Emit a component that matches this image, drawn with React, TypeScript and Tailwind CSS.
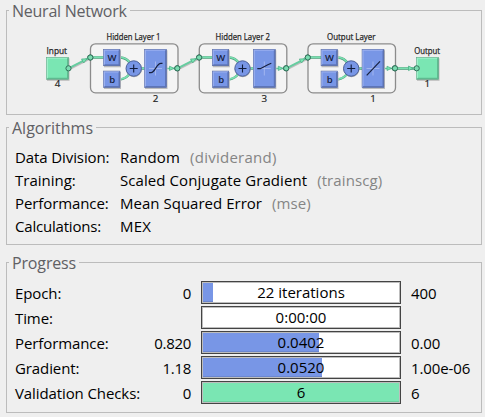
import type { ReactNode } from "react";

function Panel({ title, titleClass, className, children }: { title: string; titleClass: string; className: string; children: ReactNode }) {
  return (
    <section className={`relative ml-1.5 w-[476px] shrink-0 border border-[#bcbcbc] ${className}`}>
      <h2 className={`absolute -top-[11px] left-[2px] h-[22px] whitespace-nowrap bg-[#efefef] px-[3px] text-[16px] leading-[22px] text-[#606064] ${titleClass}`}>{title}</h2>
      {children}
    </section>
  );
}

function Label({ x, y, w, children }: { x: number; y: number; w: number; children: string }) {
  return (
    <text x={x} y={y} textLength={w} lengthAdjust="spacingAndGlyphs" fontSize="9.700" fill="#222" stroke="#222" strokeWidth="0.250">
      {children}
    </text>
  );
}

function Port({ x, y }: { x: number; y: number }) {
  return <circle cx={x} cy={y} r="2.600" fill="#7adbb0" stroke="#32705a" strokeWidth="1" />;
}

function Arrow({ x, y }: { x: number; y: number }) {
  return (
    <g>
      <path d={`M${x} ${y + 1}l20.500 -10.500`} stroke="#bdbdbd" strokeWidth="2.500" />
      <path d={`M${x} ${y}l20.500 -10.500`} stroke="#66cda0" strokeWidth="2" />
      <path d={`M${x + 18.5} ${y - 9.5}l-5.500 0.200l2.200 4z`} fill="#79e6b3" stroke="#4aa982" strokeWidth="0.700" />
    </g>
  );
}

function Block({ x, y, w, h, green }: { x: number; y: number; w: number; h: number; green?: boolean }) {
  const face = green ? "#7ae6b3" : "#7896e6";
  const light = green ? "#9df0ca" : "#9ab0ef";
  const dark = green ? "#5fba90" : "#5d75b8";
  const edge = green ? "#659b82" : "#5c6b9a";
  return (
    <g>
      <rect x={x + 0.5} y={y + 1} width={w + 0.5} height={h + 0.5} fill="#bcbcbc" />
      <rect x={x} y={y} width={w} height={h} fill={face} />
      <path d={`M${x} ${y}h${w}l-1.500 1.500h${3 - w}v${h - 3}l-1.500 1.500z`} fill={light} />
      <path d={`M${x + w} ${y}v${h}h${-w}l1.500 -1.500h${w - 3}v${3 - h}z`} fill={dark} />
      <rect x={x} y={y} width={w} height={h} fill="none" stroke={edge} strokeWidth="0.500" />
    </g>
  );
}

function Layer({ x, title, tx, tw, size, curve }: { x: number; title: string; tx: number; tw: number; size: string; curve: string }) {
  return (
    <g>
      <Label x={tx} y={40} w={tw}>{title}</Label>
      <rect x={x + 0.5} y="43.800" width="87.500" height="49" rx="5" fill="#f4f4f4" stroke="#8c8c8c" strokeWidth="1.300" />
      <g transform={`translate(${x} 0)`} fill="none">
        <path d="M0 57.500H14M30 57.500Q37 58 40 63M30 79.500Q37 78.500 40 73M51 68.500H55" stroke="#4e9e7b" strokeWidth="2.600" />
        <path d="M0 57.200H14M30 57.200Q37 57.700 40 63M30 79.200Q37 78.200 40 73M51 68.200H55" stroke="#79dfb0" strokeWidth="1.600" />
        <path d="M77 68.500H87" stroke="#66cda0" strokeWidth="1.500" />
        <path d="M79.500 66.200L84 68.300L79.500 70.500z" fill="#79e6b3" stroke="#4aa982" strokeWidth="0.700" />
        <Block x={13.500} y={49.300} w={16.500} h={16.500} />
        <Block x={13.500} y={71} w={16.500} h={16.500} />
        <circle cx="44" cy="69.200" r="8" fill="#aaa" />
        <circle cx="43.700" cy="68.500" r="7.700" fill="#7896e6" stroke="#4d629b" strokeWidth="1" />
        <path d="M39.700 68.500h8M43.700 64.500v8" stroke="#111c3c" strokeWidth="1.100" />
        <Block x={54.500} y={49.300} w={22} h={38.200} />
        <path d="M59 68.500h13M65.500 61.500v14" stroke="#b4c4f4" strokeWidth="0.700" />
        <path d={curve} stroke="#17213f" strokeWidth="1.200" />
        <text x="22" y="60.700" textAnchor="middle" fontSize="9.500" fontWeight="600" fill="#16213e">W</text>
        <text x="22.300" y="82.800" textAnchor="middle" fontSize="9.500" fontWeight="600" fill="#16213e">b</text>
      </g>
      <Port x={x + 0.3} y={57.5} />
      <Port x={x + 87.3} y={68.3} />
      <text x={x + 65.5} y="102.300" textAnchor="middle" fontSize="9.800" fill="#222" stroke="#222" strokeWidth="0.200">{size}</text>
    </g>
  );
}

function Network() {
  return (
    <svg width="474" height="102" viewBox="7 11 474 102" className="block font-['Open_Sans',sans-serif]">
      <Label x={46.5} y={54} w={20.5}>Input</Label>
      <Label x={414.2} y={54} w={25.8}>Output</Label>
      <Block x={46.500} y={57.300} w={22} h={22} green />
      <Block x={416.500} y={57.300} w={22} h={22} green />
      <text x="57.500" y="87.300" textAnchor="middle" fontSize="9.800" fill="#222" stroke="#222" strokeWidth="0.200">4</text>
      <text x="427.300" y="87.300" textAnchor="middle" fontSize="9.800" fill="#222" stroke="#222" strokeWidth="0.200">1</text>
      <Layer x={90} title="Hidden Layer 1" tx={106.5} tw={54} size="2" curve="M59 72.600H61C65.500 72.600 66 63.300 71 63.300H72.500" />
      <Layer x={198.800} title="Hidden Layer 2" tx={215.5} tw={54.5} size="3" curve="M58.500 68.700H61.500L69 64.700L72.500 63.300" />
      <Layer x={307.500} title="Output Layer" tx={327} tw={48.5} size="1" curve="M59.200 75.300L72.500 61.300" />
      <Arrow x={68.500} y={68.300} />
      <Arrow x={177.500} y={68.300} />
      <Arrow x={286.300} y={68.300} />
      <path d="M395 68.500H416" stroke="#4e9e7b" strokeWidth="2.600" />
      <path d="M395 68.300H416" stroke="#79dfb0" strokeWidth="1.500" />
      <path d="M408.500 66L413 68.300L408.500 70.600z" fill="#79e6b3" stroke="#4aa982" strokeWidth="0.700" />
      <Port x={68.500} y={68.300} />
      <Port x={177.300} y={68.300} />
      <Port x={286.200} y={68.300} />
      <Port x={90.300} y={57.500} />
      <Port x={199.100} y={57.500} />
      <Port x={307.800} y={57.500} />
      <Port x={395} y={68.300} />
      <Port x={416.700} y={68.300} />
    </svg>
  );
}

const algorithms = [
  { name: "Data Division:", value: "Random", fn: "(dividerand)", nameClass: "tracking-[-0.1px]", valueClass: "tracking-[0.2px]", fnClass: "tracking-[0.25px]" },
  { name: "Training:", value: "Scaled Conjugate Gradient", fn: "(trainscg)", nameClass: "tracking-[0px]", valueClass: "tracking-[0.08px]", fnClass: "tracking-[0.1px]" },
  { name: "Performance:", value: "Mean Squared Error", fn: "(mse)", nameClass: "tracking-[-0.1px]", valueClass: "tracking-[0.02px]", fnClass: "tracking-[0.1px]" },
  { name: "Calculations:", value: "MEX", fn: "", nameClass: "tracking-[-0.2px]", valueClass: "tracking-[0.15px]", fnClass: "" },
];

const progress = [
  { name: "Epoch:", from: "0", text: "22 iterations", to: "400", fill: "w-[10px] bg-[#7896e6] border-[#6c87cf]" },
  { name: "Time:", from: "", text: "0:00:00", to: "", fill: "w-0 border-transparent" },
  { name: "Performance:", from: "0.820", text: "0.0402", to: "0.00", fill: "w-[116px] bg-[#7896e6] border-[#6c87cf]" },
  { name: "Gradient:", from: "1.18", text: "0.0520", to: "1.00e-06", fill: "w-[119px] bg-[#7896e6] border-[#6c87cf]" },
  { name: "Validation Checks:", from: "0", text: "6", to: "6", fill: "w-[196px] bg-[#7ae6b3] border-[#6ccfa0]" },
];

export default function App() {
  return (
    <main className="flex h-[417px] w-[485px] flex-col overflow-hidden bg-[#efefef] pt-2.5 font-['Open_Sans',sans-serif] text-[15px] text-black">
      <Panel title="Neural Network" titleClass="tracking-[-0.25px]" className="h-[105px]">
        <Network />
      </Panel>
      <Panel title="Algorithms" titleClass="" className="mt-3 h-[118px] pl-[8px] pt-[18px]">
        {algorithms.map((a) => (
          <div key={a.name} className="flex h-[23px] items-center whitespace-nowrap leading-[23px]">
            <span className={`w-[105px] ${a.nameClass}`}>{a.name}</span>
            <span className={a.valueClass}>{a.value}</span>
            <span className={`ml-[10px] text-[#858585] ${a.fnClass}`}>{a.fn}</span>
          </div>
        ))}
      </Panel>
      <Panel title="Progress" titleClass="tracking-[-0.15px]" className="mt-[17px] h-[151px] pl-[8px] pt-[18px]">
        <div className="flex flex-col gap-0.5">
          {progress.map((p) => (
            <div key={p.name} className="flex h-[23px] whitespace-nowrap leading-[25px]">
              <span className="w-[130px] tracking-[-0.1px]">{p.name}</span>
              <span className="w-[46px] text-right tracking-[-0.3px]">{p.from}</span>
              <div className="ml-[10px] grid h-[23px] w-[200px] border border-[#444] bg-white">
                <div className="col-start-1 row-start-1 border border-[#bdbdbd]">
                  <div className={`h-[19px] border-b ${p.fill}`} />
                </div>
                <span className="col-start-1 row-start-1 text-center leading-[21px]">{p.text}</span>
              </div>
              <span className="ml-[10px] tracking-[-0.1px]">{p.to}</span>
            </div>
          ))}
        </div>
      </Panel>
    </main>
  );
}
